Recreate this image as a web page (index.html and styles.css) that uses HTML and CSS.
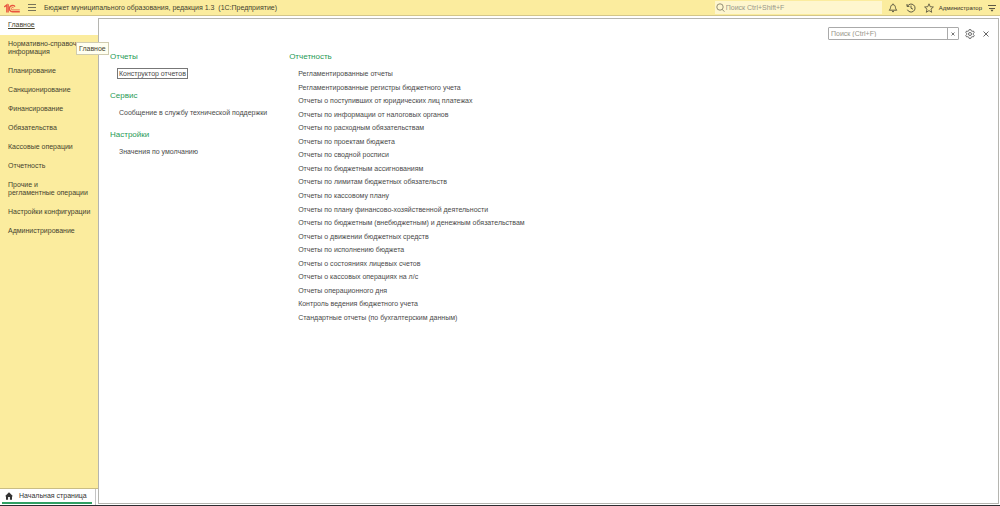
FILE: index.html
```html
<!DOCTYPE html>
<html lang="ru">
<head>
<meta charset="utf-8">
<title>Бюджет муниципального образования</title>
<link rel="stylesheet" href="styles.css">
</head>
<body>
<div class="app">
  <header class="topbar">
    <svg class="logo" viewBox="0 0 16 10" fill="none" stroke="#e8543f"><path d="M.2 4 2.900 2V9.500" stroke-width="1.500"/><path d="M4.300 9.500V1.200" stroke-width="1"/><path d="M11 3.600A3.200 3.200 0 1 0 8.700 8.800H15.800" stroke-width="1.400"/><path d="M9.600 4.800A1.300 1.300 0 1 0 8.800 6.900H15.800" stroke-width=".8"/></svg>
    <button class="icon-btn menu-btn" aria-label="Меню"><svg width="9" height="8" viewBox="0 0 9 8" stroke="#77735a"><path d="M1 .5h8M1 3.5h8M1 6.5h8"/></svg></button>
    <h1 class="title">Бюджет муниципального образования, редакция 1.3&nbsp; (1С:Предприятие)</h1>
    <label class="global-search">
      <svg width="9" height="9" viewBox="0 0 9 9" fill="none" stroke="#77745f" stroke-width=".8"><circle cx="4" cy="4" r="3.2"/><path d="M6.2 6.4 8.4 8.7"/></svg>
      <input type="search" placeholder="Поиск Ctrl+Shift+F" aria-label="Поиск">
    </label>
    <button class="icon-btn spaced" aria-label="Уведомления"><svg width="10" height="10" viewBox="0 0 10 10" fill="none" stroke="#4c4938" stroke-width=".9"><path d="M1.2 7.2C2.5 6 2.4 5 2.7 3.7 3 2.4 3.8 1.7 5 1.7s2 .7 2.3 2C7.6 5 7.5 6 8.8 7.2ZM5 1.7V.6M4 8.6h2"/></svg></button>
    <button class="icon-btn spaced" aria-label="История"><svg width="10" height="10" viewBox="0 0 10 10" fill="none" stroke="#4c4938" stroke-width=".9"><path d="M1.500 3.200A4 4 0 1 1 1.400 6.700M1 1v2.400h2.400M5 2.600v2.600l2 1"/></svg></button>
    <button class="icon-btn" aria-label="Избранное"><svg width="10" height="10" viewBox="0 0 10 10" fill="none" stroke="#4c4938" stroke-width=".8"><path d="m5 .8 1.2 2.9 3.2.3L7 6.1l.7 3.2L5 7.6 2.3 9.3 3 6.1.6 4l3.2-.3Z"/></svg></button>
    <button class="user">Администратор</button>
    <button class="icon-btn" aria-label="Настройки окна"><svg width="8" height="8" viewBox="0 0 8 8" stroke="#5c5946"><path d="M0 1.500h8M1 4.500h6"/><path d="M2.500 5.800h3L4 7.800Z" fill="#4c4938" stroke="none"/></svg></button>
  </header>
  <div class="workspace">
    <aside class="side">
      <nav class="sections">
        <a class="section active" href="#">Главное<span class="tip" role="tooltip">Главное</span></a>
        <a class="section clipped" href="#">Нормативно-справоч<br>информация</a>
        <a class="section" href="#">Планирование</a>
        <a class="section" href="#">Санкционирование</a>
        <a class="section" href="#">Финансирование</a>
        <a class="section" href="#">Обязательства</a>
        <a class="section" href="#">Кассовые операции</a>
        <a class="section" href="#">Отчетность</a>
        <a class="section" href="#">Прочие и<br>регламентные операции</a>
        <a class="section" href="#">Настройки конфигурации</a>
        <a class="section" href="#">Администрирование</a>
      </nav>
      <div class="tabs">
        <button class="tab"><svg width="8" height="8" viewBox="0 0 8 8" fill="#333"><path d="M4 .3 8 4.2H7V7.7H4.9V5H3.1V7.7H1V4.2H0Z"/></svg>Начальная страница</button>
      </div>
    </aside>
    <main class="panel">
      <div class="tools">
        <div class="find">
          <input type="text" placeholder="Поиск (Ctrl+F)" aria-label="Поиск в меню">
          <button class="clear" aria-label="Очистить"><svg width="4" height="4" viewBox="0 0 4 4" stroke="#555" stroke-width=".8"><path d="m.5.5 3 3M3.5.5l-3 3"/></svg></button>
        </div>
        <button class="icon-btn" aria-label="Настройки"><svg width="10" height="10" viewBox="0 0 10 10" fill="none" stroke="#5a5a5a" stroke-width=".9"><path d="M4.2.6h1.6l.4 1.2 1 .5 1.2-.3.8 1.4-.8.9v1.3l.8.9-.8 1.4-1.2-.2-1 .5-.4 1.2H4.2l-.4-1.2-1-.5-1.2.2-.8-1.4.8-.9V4.3L.8 3.4 1.6 2l1.2.3 1-.5Z"/><circle cx="5" cy="5" r="1.5"/></svg></button>
        <button class="icon-btn" aria-label="Закрыть"><svg width="6" height="6" viewBox="0 0 6 6" stroke="#555" stroke-width=".9"><path d="m.5.5 5 5M5.5.5l-5 5"/></svg></button>
      </div>
      <div class="columns">
        <div class="column">
          <section class="group">
            <h2>Отчеты</h2>
            <a class="command focused" href="#">Конструктор отчетов</a>
          </section>
          <section class="group">
            <h2>Сервис</h2>
            <a class="command" href="#">Сообщение в службу технической поддержки</a>
          </section>
          <section class="group">
            <h2>Настройки</h2>
            <a class="command" href="#">Значения по умолчанию</a>
          </section>
        </div>
        <section class="group">
          <h2>Отчетность</h2>
          <div class="reports">
            <a class="command" href="#">Регламентированные отчеты</a>
            <a class="command" href="#">Регламентированные регистры бюджетного учета</a>
            <a class="command" href="#">Отчеты о поступивших от юридических лиц платежах</a>
            <a class="command" href="#">Отчеты по информации от налоговых органов</a>
            <a class="command" href="#">Отчеты по расходным обязательствам</a>
            <a class="command" href="#">Отчеты по проектам бюджета</a>
            <a class="command" href="#">Отчеты по сводной росписи</a>
            <a class="command" href="#">Отчеты по бюджетным ассигнованиям</a>
            <a class="command" href="#">Отчеты по лимитам бюджетных обязательств</a>
            <a class="command" href="#">Отчеты по кассовому плану</a>
            <a class="command" href="#">Отчеты по плану финансово-хозяйственной деятельности</a>
            <a class="command" href="#">Отчеты по бюджетным (внебюджетным) и денежным обязательствам</a>
            <a class="command" href="#">Отчеты о движении бюджетных средств</a>
            <a class="command" href="#">Отчеты по исполнению бюджета</a>
            <a class="command" href="#">Отчеты о состояниях лицевых счетов</a>
            <a class="command" href="#">Отчеты о кассовых операциях на л/с</a>
            <a class="command" href="#">Отчеты операционного дня</a>
            <a class="command" href="#">Контроль ведения бюджетного учета</a>
            <a class="command" href="#">Стандартные отчеты (по бухгалтерским данным)</a>
          </div>
        </section>
      </div>
    </main>
  </div>
</div>
</body>
</html>
```
FILE: styles.css
```css
* { box-sizing: border-box; }
body {
  margin: 0;
  font: 7px/8px "Liberation Sans", Arial, sans-serif;
  color: #4a4a4a;
  background: #fff;
}
button, input { font: inherit; color: inherit; border: 0; padding: 0; background: none; }
input { outline: 0; min-width: 0; }
input::placeholder { color: #98968a; opacity: 1; }
a { color: inherit; text-decoration: none; }
h1, h2 { margin: 0; font-weight: 400; }
svg { display: block; flex: none; }

.app { display: flex; flex-direction: column; height: 100vh; border-bottom: 1px solid #2c2c30; }

.topbar {
  display: flex;
  align-items: center;
  gap: 6px;
  height: 16px;
  padding: 0 3px 0 4px;
  background: #fbec9e;
  border-bottom: 1px solid #d3c68a;
}
.logo { width: 16px; height: 10px; }
.icon-btn { display: grid; place-items: center; width: 10px; height: 10px; }
.title { flex: 1; font-size: 7px; line-height: 10px; color: #45432f; }
.menu-btn, .spaced { margin-right: 2px; }
.global-search {
  display: flex;
  align-items: center;
  gap: 1px;
  width: 167px;
  height: 13px;
  padding: 0 1px;
  background: #fef6ce;
}
.global-search input { flex: 1; }
.user { margin: 0 -1px; font-size: 6px; color: #33312a; }

.workspace { display: flex; flex: 1; min-height: 0; }
.side { display: flex; flex-direction: column; width: 98px; }
.sections {
  display: flex;
  flex-direction: column;
  flex: 1;
  background: #fbec9e;
  border-bottom: 1px solid #c9bd85;
}
.section { padding: 5px 4px 6px 8px; color: #45432f; }
.section.active { position: relative; background: #fff; text-decoration: underline; }
.section.clipped { white-space: nowrap; }
.tip {
  position: absolute;
  left: 76px;
  top: 26px;
  padding: 1px 2px;
  line-height: 9px;
  white-space: nowrap;
  background: #fffff0;
  border: 1px solid #d0ccb0;
}
.tabs { padding: 0 3px 1px 2px; border-right: 1px solid #c4c4c4; margin-right: 2px; }
.tab {
  display: flex;
  align-items: center;
  gap: 6px;
  width: 100%;
  height: 15px;
  padding: 0 3px;
  border-bottom: 2px solid #2fa063;
  color: #333;
}

.panel {
  flex: 1;
  margin: 2px 1px 1px 0;
  padding: 8px 7px;
  border: 1px solid #b5b5b0;
}
.tools { display: flex; justify-content: flex-end; align-items: center; gap: 6px; }
.find {
  display: flex;
  width: 131px;
  height: 13px;
  border: 1px solid #aaa;
  border-radius: 1px;
}
.find input { flex: 1; padding: 0 2px; }
.clear { display: grid; place-items: center; width: 11px; border-left: 1px solid #aaa; }

.columns { display: flex; gap: 21px; padding: 12px 4px; }
.column { display: flex; flex-direction: column; gap: 13px; }
.group { display: flex; flex-direction: column; align-items: flex-start; gap: 7px; }
.group h2 { font-size: 8px; line-height: 10px; color: #1f9a55; }
.command { margin-left: 8px; padding: 0 1px; line-height: 9px; }
.focused { outline: 1px solid #777; }
.reports { display: grid; grid-auto-rows: 1fr; align-items: center; height: 257px; margin-top: -2px; }
```
